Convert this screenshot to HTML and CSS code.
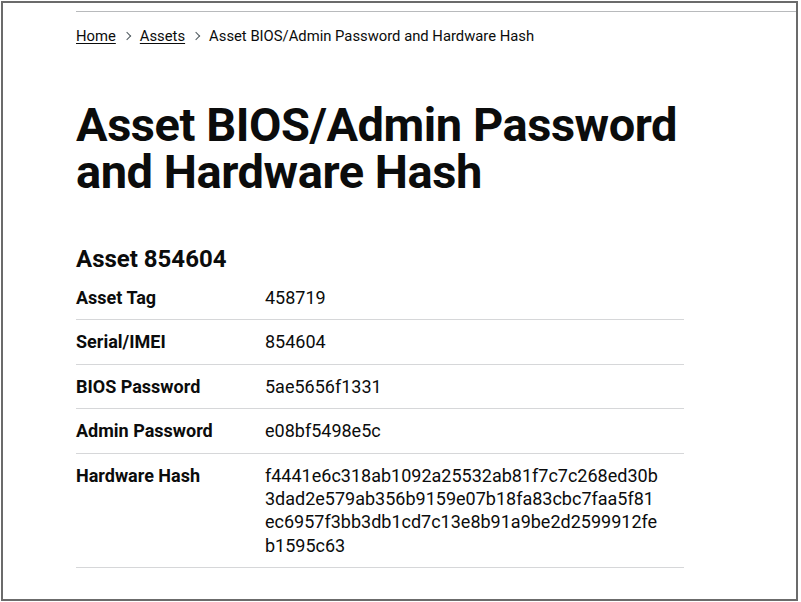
FILE: index.html
```html
<!DOCTYPE html>
<html lang="en">
<head>
<meta charset="utf-8">
<title>Asset BIOS/Admin Password and Hardware Hash</title>
<link rel="stylesheet" href="styles.css">
</head>
<body>
<div class="frame">
  <div class="page">
    <div class="topline"></div>
    <nav class="breadcrumbs">
      <ol class="crumb-list">
        <li class="crumb"><a class="crumb-link" href="#">Home</a></li>
        <li class="crumb"><a class="crumb-link" href="#">Assets</a></li>
        <li class="crumb current">Asset BIOS/Admin Password and Hardware Hash</li>
      </ol>
    </nav>
    <main class="main">
      <h1 class="title">Asset BIOS/Admin Password and Hardware Hash</h1>
      <h2 class="subtitle">Asset 854604</h2>
      <dl class="summary">
        <div class="row"><dt class="key">Asset Tag</dt><dd class="value">458719</dd></div>
        <div class="row"><dt class="key">Serial/IMEI</dt><dd class="value">854604</dd></div>
        <div class="row"><dt class="key">BIOS Password</dt><dd class="value">5ae5656f1331</dd></div>
        <div class="row"><dt class="key">Admin Password</dt><dd class="value">e08bf5498e5c</dd></div>
        <div class="row"><dt class="key">Hardware Hash</dt><dd class="value hash"><span class="hash-line">f4441e6c318ab1092a25532ab81f7c7c268ed30b</span><span class="hash-line">3dad2e579ab356b9159e07b18fa83cbc7faa5f81</span><span class="hash-line">ec6957f3bb3db1cd7c13e8b91a9be2d2599912fe</span><span class="hash-line">b1595c63</span></dd></div>
      </dl>
    </main>
  </div>
</div>
</body>
</html>
```

FILE: styles.css
```css
html, body {
  margin: 0;
  padding: 0;
  background: #ffffff;
}
body {
  font-family: Roboto, "Liberation Sans", Arial, sans-serif;
  color: #0b0c0c;
}
.frame {
  box-sizing: border-box;
  margin: 1px 3px 0 1px;
  height: 600px;
  border: 2px solid #6b6b6b;
  background: #fff;
  overflow: hidden;
}
.page {
  padding-left: 73px;
}
.topline {
  margin-top: 8px;
  border-top: 1px solid #b8babc;
}
.breadcrumbs {
  margin-top: 14px;
}
.crumb-list {
  list-style: none;
  margin: 0;
  padding: 0;
  display: flex;
  align-items: center;
  font-size: 14.8px;
  line-height: 20px;
}
.crumb {
  display: flex;
  align-items: center;
}
.crumb + .crumb::before {
  content: "";
  display: block;
  width: 5px;
  height: 5px;
  border-top: 1px solid #505a5f;
  border-right: 1px solid #505a5f;
  transform: rotate(45deg);
  margin: 0 10px 0 8px;
}
.crumb-link {
  color: #0b0c0c;
  text-decoration: underline;
  text-underline-offset: 2px;
  text-decoration-thickness: 1px;
}
.current {
  color: #0b0c0c;
}
.main {
  width: 608px;
}
.title {
  margin: 55px 0 0 0;
  font-size: 47px;
  line-height: 47px;
  font-weight: 700;
  letter-spacing: -0.45px;
}
.subtitle {
  margin: 49px 0 0 0;
  font-size: 24px;
  line-height: 30px;
  font-weight: 700;
}
.summary {
  margin: 2px 0 0 0;
  font-size: 18px;
  line-height: 23.4px;
}
.row {
  display: grid;
  grid-template-columns: 189px 1fr;
  border-bottom: 1px solid #d6d7d9;
}
.key {
  padding: 10px 0;
  font-weight: 700;
}
.value {
  margin: 0;
  padding: 10px 0;
}
.hash-line {
  display: block;
}
```
